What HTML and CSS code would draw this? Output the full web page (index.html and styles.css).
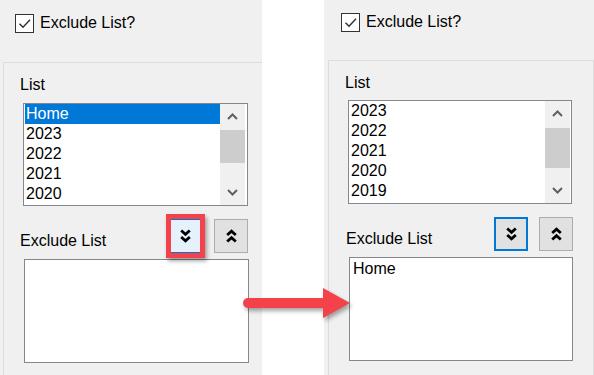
FILE: index.html
```html
<!DOCTYPE html>
<html lang="en">
<head>
<meta charset="utf-8">
<title>Exclude List</title>
<link rel="stylesheet" href="styles.css">
</head>
<body>
<div class="stage">
  <section class="panel panel-left">
    <div class="check-row">
      <span class="checkbox"><svg viewBox="0 0 17 17" width="17" height="17"><path d="M3.5 8.8 L7 12.2 L14 4.8" fill="none" stroke="#333" stroke-width="1.5"/></svg></span>
      <span class="check-label">Exclude List?</span>
    </div>
    <div class="group">
      <div class="field-label">List</div>
      <div class="listbox">
        <ul class="items">
          <li class="item selected">Home</li>
          <li class="item">2023</li>
          <li class="item">2022</li>
          <li class="item">2021</li>
          <li class="item">2020</li>
        </ul>
        <div class="scrollbar">
          <div class="sb-btn"><svg viewBox="0 0 11 7" width="11" height="7"><path d="M1 6 L5.5 1.5 L10 6" fill="none" stroke="#606060" stroke-width="2"/></svg></div>
          <div class="sb-thumb thumb-a"></div>
          <div class="sb-track"></div>
          <div class="sb-btn"><svg viewBox="0 0 11 7" width="11" height="7"><path d="M1 1 L5.5 5.5 L10 1" fill="none" stroke="#606060" stroke-width="2"/></svg></div>
        </div>
      </div>
      <div class="exclude-row">
        <div class="field-label">Exclude List</div>
        <div class="buttons">
          <button class="move-btn hover">
            <svg viewBox="0 0 11 14" width="11" height="14"><path d="M1.2 1.5 L5.5 5.3 L9.8 1.5 M1.2 8 L5.5 11.8 L9.8 8" fill="none" stroke="#000" stroke-width="2.8"/></svg>
            <span class="callout"></span>
          </button>
          <button class="move-btn">
            <svg viewBox="0 0 11 14" width="11" height="14"><path d="M1.2 6 L5.5 2.2 L9.8 6 M1.2 12.5 L5.5 8.7 L9.8 12.5" fill="none" stroke="#000" stroke-width="2.8"/></svg>
          </button>
        </div>
      </div>
      <div class="exclude-box"></div>
    </div>
  </section>

  <div class="gutter"></div>

  <section class="panel panel-right">
    <div class="check-row">
      <span class="checkbox"><svg viewBox="0 0 17 17" width="17" height="17"><path d="M3.5 8.8 L7 12.2 L14 4.8" fill="none" stroke="#333" stroke-width="1.5"/></svg></span>
      <span class="check-label">Exclude List?</span>
    </div>
    <div class="group">
      <div class="field-label">List</div>
      <div class="listbox">
        <ul class="items">
          <li class="item">2023</li>
          <li class="item">2022</li>
          <li class="item">2021</li>
          <li class="item">2020</li>
          <li class="item">2019</li>
        </ul>
        <div class="scrollbar">
          <div class="sb-btn"><svg viewBox="0 0 11 7" width="11" height="7"><path d="M1 6 L5.5 1.5 L10 6" fill="none" stroke="#606060" stroke-width="2"/></svg></div>
          <div class="sb-thumb thumb-b"></div>
          <div class="sb-track"></div>
          <div class="sb-btn"><svg viewBox="0 0 11 7" width="11" height="7"><path d="M1 1 L5.5 5.5 L10 1" fill="none" stroke="#606060" stroke-width="2"/></svg></div>
        </div>
      </div>
      <div class="exclude-row">
        <div class="field-label">Exclude List</div>
        <div class="buttons">
          <button class="move-btn focused">
            <svg viewBox="0 0 11 14" width="11" height="14"><path d="M1.2 1.5 L5.5 5.3 L9.8 1.5 M1.2 8 L5.5 11.8 L9.8 8" fill="none" stroke="#000" stroke-width="2.8"/></svg>
          </button>
          <button class="move-btn">
            <svg viewBox="0 0 11 14" width="11" height="14"><path d="M1.2 6 L5.5 2.2 L9.8 6 M1.2 12.5 L5.5 8.7 L9.8 12.5" fill="none" stroke="#000" stroke-width="2.8"/></svg>
          </button>
        </div>
      </div>
      <div class="exclude-box">
        <div class="item">Home</div>
      </div>
    </div>
  </section>

  <svg class="pointer-arrow" viewBox="0 0 116 40" width="116" height="40">
    <path d="M10 15 L86 15 L86 25 L10 25 A5 5 0 0 1 10 15 Z" fill="#f4424a"/>
    <path d="M85 5 L112 20 L85 35 Z" fill="#f4424a"/>
  </svg>
</div>
</body>
</html>
```

FILE: styles.css
```css
* { box-sizing: border-box; }

html, body {
  margin: 0;
  padding: 0;
  background: #ffffff;
}

body {
  font-family: "Liberation Sans", Arial, sans-serif;
  font-size: 16px;
  color: #000;
}

.stage {
  position: relative;
  display: flex;
  width: 594px;
  height: 375px;
  overflow: hidden;
}

.panel {
  display: flex;
  flex-direction: column;
  height: 375px;
  background: #f0f0f0;
}

.panel-left { width: 262px; }
.panel-right { width: 270px; }

.gutter {
  width: 62px;
  background: #ffffff;
}

/* checkbox row */
.check-row {
  display: flex;
  align-items: flex-start;
}

.panel-left .check-row { padding: 14px 0 0 15px; }
.panel-right .check-row { padding: 13px 0 0 17px; }

.checkbox {
  width: 19px;
  height: 19px;
  border: 1px solid #333;
  background: #fff;
  display: flex;
  align-items: center;
  justify-content: center;
}

.check-label {
  margin-left: 6px;
  line-height: 19px;
  margin-top: -1px;
}

/* group box */
.group {
  flex: 1;
  display: flex;
  flex-direction: column;
  border-top: 1px solid #dcdcdc;
  border-left: 1px solid #dcdcdc;
}

.panel-left .group { margin: 29px 0 0 3px; }
.panel-right .group {
  margin: 28px 0 0 4px;
  border-right: 1px solid #dcdcdc;
}

.field-label {
  line-height: 18px;
  height: 18px;
}

.group > .field-label {
  margin-top: 13px;
  padding-left: 16px;
}

/* list box */
.listbox {
  display: flex;
  background: #fff;
  border: 1px solid #828790;
  margin-left: 19px;
}

.panel-left .listbox {
  width: 225px;
  height: 103px;
  margin-top: 9px;
  padding: 0 2px 0 1px;
}

.panel-right .listbox {
  width: 224px;
  height: 104px;
  margin-top: 8px;
  padding: 0 1px 0 1px;
}

.items {
  list-style: none;
  margin: 0;
  padding: 0;
  flex: 1;
}

.item {
  height: 20px;
  line-height: 20px;
  padding-left: 1px;
  white-space: nowrap;
}

.item.selected {
  background: #0078d7;
  color: #fff;
}

.scrollbar {
  width: 25px;
  display: flex;
  flex-direction: column;
  background: #f0f0f0;
}

.sb-btn {
  height: 25px;
  display: flex;
  align-items: center;
  justify-content: center;
}

.sb-thumb {
  background: #cdcdcd;
}

.thumb-a { margin-top: 1px; height: 33px; }
.thumb-b { margin-top: 2px; height: 40px; }

.sb-track { flex: 1; }

/* exclude row */
.exclude-row {
  display: flex;
  align-items: flex-end;
  justify-content: space-between;
  margin-top: 13px;
}

.exclude-row .field-label {
  margin-bottom: 3px;
}

.panel-left .exclude-row .field-label { padding-left: 16px; }
.panel-right .exclude-row .field-label { padding-left: 17px; }

.buttons {
  display: flex;
}

.panel-left .buttons { gap: 12px; padding-right: 14px; }
.panel-right .buttons { gap: 11px; padding-right: 20px; }

.move-btn {
  position: relative;
  width: 34px;
  height: 34px;
  padding: 0;
  margin: 0;
  border: 1px solid #adadad;
  background: #e1e1e1;
  display: flex;
  align-items: center;
  justify-content: center;
}

.move-btn.hover {
  background: #e5f1fb;
  border-color: #0078d7;
}

.move-btn.focused {
  border: 2px solid #0078d7;
}

.callout {
  position: absolute;
  left: -3px;
  top: -6px;
  width: 39px;
  height: 44px;
  border: 5px solid #f4424a;
  box-shadow: 2px 3px 4px rgba(0, 0, 0, 0.35);
}

/* exclude list box */
.exclude-box {
  margin-top: 6px;
  margin-left: 20px;
  border: 1px solid #828790;
  background: #fff;
  padding: 1px 2px;
}

.panel-left .exclude-box { width: 225px; height: 104px; }
.panel-right .exclude-box { width: 224px; height: 104px; }

/* pointer arrow overlay */
.pointer-arrow {
  position: absolute;
  left: 238px;
  top: 283px;
  filter: drop-shadow(2px 3px 2px rgba(0, 0, 0, 0.35));
}
```
